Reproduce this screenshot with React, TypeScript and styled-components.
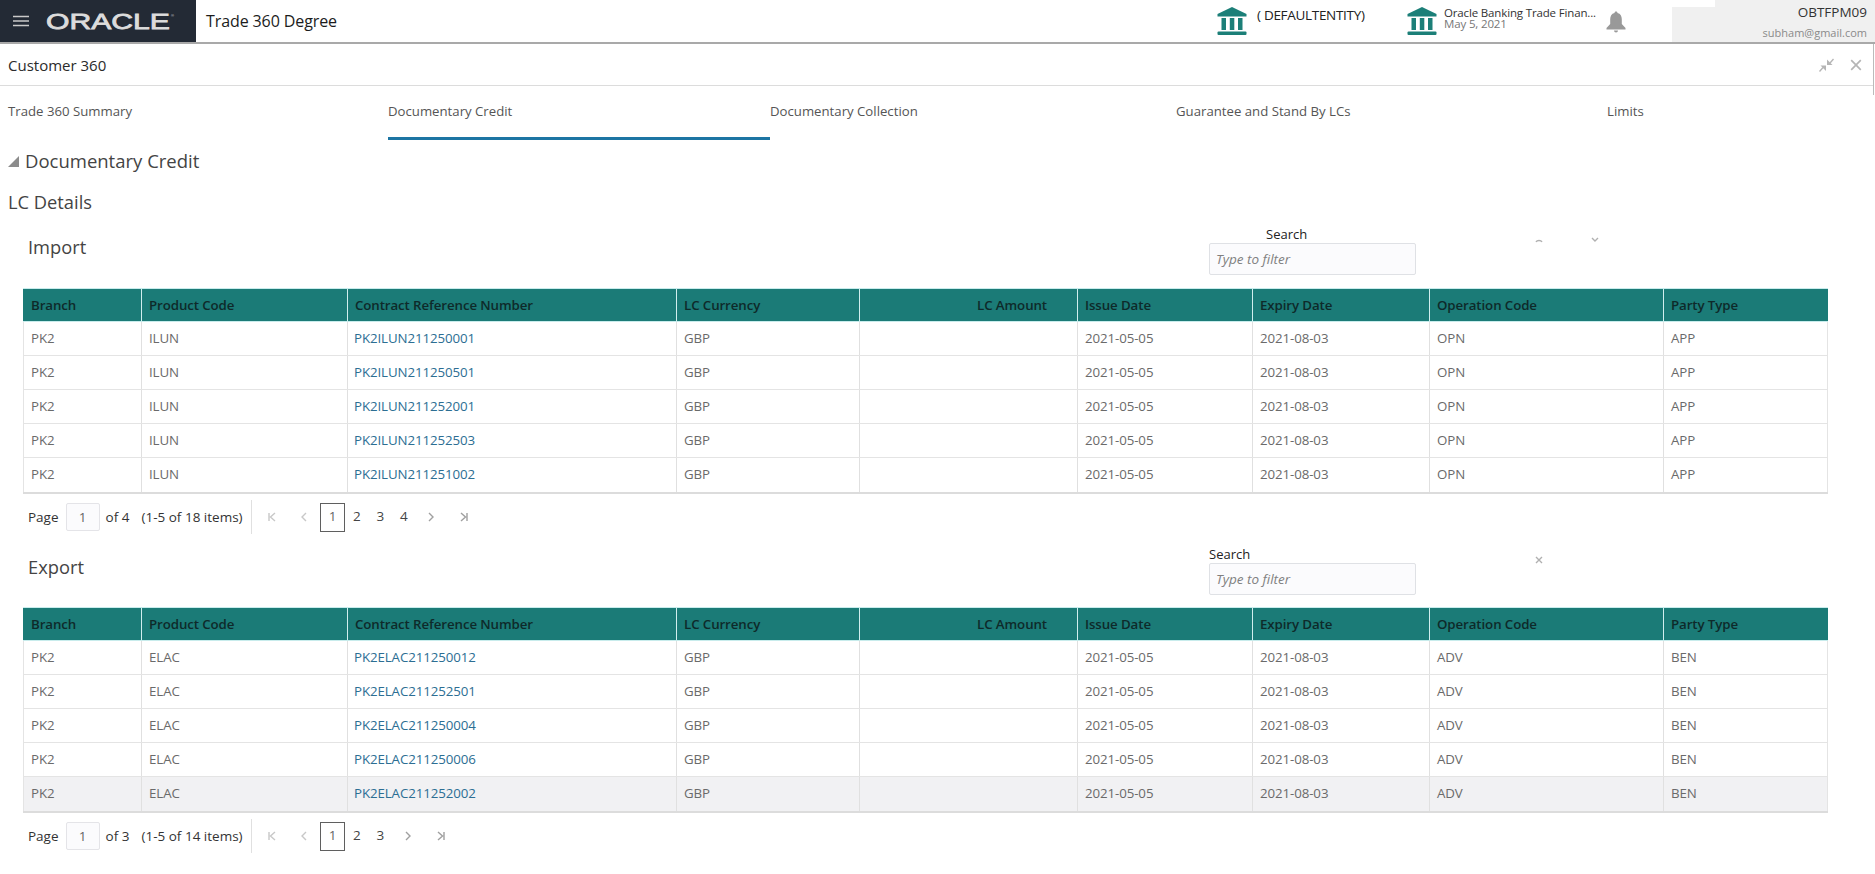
import React from "react";
import styled, { createGlobalStyle } from "styled-components";

const Global = createGlobalStyle`
  html, body { margin: 0; padding: 0; background: #fff; }
  body { font-family: "Open Sans", "Noto Sans", "Liberation Sans", sans-serif; overflow: hidden; }
  * { box-sizing: border-box; }
`;

const Page = styled.div`width: 1875px; height: 874px; display: flex; flex-direction: column; overflow: hidden;`;
const Header = styled.header`height: 44px; display: flex; align-items: stretch; border-bottom: 2px solid #a9a9a9; flex: none;`;
const Brand = styled.div`width: 196px; background: #232a35; display: flex; align-items: center; padding-left: 13px; gap: 17px; color: #ddd;`;
const AppTitle = styled.div`font-size: 16px; color: #1c1c1c; padding: 0 0 1px 10px; display: flex; align-items: center; letter-spacing: -0.1px;`;
const HeaderRight = styled.div`margin-left: auto; display: flex; align-items: stretch;`;
const Entity = styled.div<{ $w: number; $gap: number }>`width: ${(p) => p.$w}px; display: flex; gap: ${(p) => p.$gap}px; padding-top: 7px; align-items: flex-start;`;
const EntityName = styled.div`font-size: 13.5px; color: #222; line-height: 16px; letter-spacing: -0.3px; white-space: nowrap;`;
const EntityStack = styled.div`display: flex; flex-direction: column; margin-top: 0; white-space: nowrap;`;
const EntityLine = styled.span`font-size: 11.5px; line-height: 11px; color: #333; letter-spacing: -0.15px;`;
const EntityDate = styled(EntityLine)`color: #777;`;
const Bell = styled.div`width: 66px; padding-top: 11px;`;
const User = styled.div`position: relative; width: 203px; background: #f0f0f0; text-align: right; padding: 3px 8px 0 0;
  &::before { content: ""; position: absolute; left: 0; top: 0; width: 43px; height: 7px; background: #fff; }`;
const UserName = styled.div`font-size: 13.5px; color: #333; line-height: 18px;`;
const UserMail = styled.div`font-size: 11px; color: #8a8a8a; line-height: 16px; margin-top: 4px;`;

const TitleBar = styled.div`position: relative; width: 1874px; height: 42px; flex: none; display: flex; align-items: center; justify-content: space-between; padding: 0 11px 0 8px; border-bottom: 1px solid #dcdcdc; border-right: 1px solid #bbb; font-size: 15px; color: #2b2b2b;
  &::after { content: ""; position: absolute; right: -1px; top: 41px; width: 1px; height: 10px; background: #bbb; }`;
const TitleTools = styled.div`display: flex; gap: 16px; align-items: center; color: #b5b5b5;`;

const Tabs = styled.nav`height: 55px; flex: none; display: grid; grid-template-columns: 380px 382px 406px 431px 1fr; padding-left: 8px;`;
const Tab = styled.div<{ $active?: boolean }>`font-size: 13.2px; color: #555; padding-top: 16px;
  border-bottom: 3px solid ${(p) => (p.$active ? "#1c75a3" : "transparent")}; height: 54px;`;

const Content = styled.main`padding: 0 47px 0 8px; display: flex; flex-direction: column;`;
const Collapse = styled.div`display: flex; align-items: center; gap: 6px; height: 38px; font-size: 18.5px; color: #444;`;
const Tri = styled.span`width: 0; height: 0; border-style: solid; border-width: 0 0 11px 11px; border-color: transparent transparent #8c8c8c transparent; margin-top: 3px;`;
const SubHead = styled.div`font-size: 18.3px; color: #444; height: 26px; line-height: 26px; margin-top: 10px;`;

const Toolbar = styled.div<{ $h: number }>`display: flex; height: ${(p) => p.$h}px; margin-left: 20px;`;
const SectionName = styled.div<{ $top: number }>`font-size: 18.3px; color: #444; width: 1181px; padding-top: ${(p) => p.$top}px; line-height: 26px;`;
const SearchBox = styled.div<{ $top: number }>`width: 207px; display: flex; flex-direction: column; flex: none; padding-top: ${(p) => p.$top}px;`;
const SearchLabel = styled.label<{ $indent: number }>`font-size: 13px; color: #222; line-height: 16px; padding-left: ${(p) => p.$indent}px; height: 17px;`;
const FilterInput = styled.div`height: 32px; border: 1px solid #dfe1e5; border-radius: 2px; background: #fbfbfd; font-size: 13.5px; font-style: italic; color: #808080; padding: 6px 6px; line-height: 18px;`;
const ToolIcons = styled.div<{ $top: number }>`display: flex; margin-left: 118px; gap: 46px; color: #b0b0b0; padding-top: ${(p) => p.$top}px; align-items: flex-start;`;

const Grid = styled.div`margin-left: 15px; width: 1805px; display: flex; flex-direction: column; border-bottom: 2px solid #dcdcdc;`;
const cols = "118px 206px 329px 183px 218px 175px 177px 234px 165px";
const HeadRow = styled.div`display: grid; grid-template-columns: ${cols}; height: 34px; background: #1b7b77; border-top: 1px solid #c8ecec; border-bottom: 1px solid #c8ecec;`;
const HeadCell = styled.div<{ $right?: boolean }>`font-size: 13.3px; font-weight: 600; color: #0e2a2a; padding: 0 0 0 7px; line-height: 32px; letter-spacing: -0.1px; border-left: 1px solid #d2eeee; white-space: nowrap;
  text-align: ${(p) => (p.$right ? "right" : "left")}; padding-right: ${(p) => (p.$right ? "30px" : "0")};
  &:first-child { border-left: none; padding-left: 8px; }`;
const Row = styled.div<{ $hl?: boolean }>`display: grid; grid-template-columns: ${cols}; height: 34px; background: ${(p) => (p.$hl ? "#f1f1f3" : "#fff")}; border-bottom: 1px solid #e4e4e4; box-shadow: inset 1px 0 #e4e4e4, inset -1px 0 #e4e4e4; &:last-child { border-bottom: none; }`;
const Cell = styled.div`font-size: 13.3px; color: #6a6a6a; padding-left: 7px; line-height: 33px; border-left: 1px solid #e0e0e0; white-space: nowrap; letter-spacing: -0.1px; &:first-child { border-left: none; padding-left: 8px; }`;
const LinkCell = styled(Cell)`color: #2c6e93; padding-left: 6px;`;

const Pager = styled.div`height: 46px; display: flex; align-items: center; margin-left: 20px; font-size: 13.5px; color: #333;`;
const PageInput = styled.div`width: 34px; height: 28px; margin: 0 6px 0 7px; border: 1px solid #e4e4e8; border-radius: 2px; background: #fbfbfd; text-align: center; line-height: 26px; color: #666;`;
const PagerCount = styled.span`margin-left: 12px; margin-right: 8px;`;
const Sep = styled.span`width: 1px; height: 34px; background: #e0e0e0;`;
const PagerNav = styled.div`display: flex; align-items: center; margin-left: 9px;`;
const NavIcon = styled.span<{ $w: number; $dim?: boolean; $lead?: number }>`width: ${(p) => p.$w}px; padding-left: ${(p) => p.$lead ?? 0}px; display: flex; justify-content: center; color: ${(p) => (p.$dim ? "#c8c8c8" : "#a0a0a0")};`;
const PageNum = styled.span<{ $on?: boolean }>`width: ${(p) => (p.$on ? 25 : 23.5)}px; height: 29px; display: flex; align-items: center; justify-content: center; line-height: 1; border: ${(p) => (p.$on ? "1px solid #5f5f5f" : "none")}; color: ${(p) => (p.$on ? "#666" : "#444")};`;

const Bank = () => (
  <svg width="30" height="28" viewBox="0 0 30 28" fill="#1c7f78">
    <path d="M15 0 L29.500 7 V9.500 H0.500 V7 Z" />
    <rect x="4.500" y="11" width="4.500" height="12" />
    <rect x="12.800" y="11" width="4.500" height="12" />
    <rect x="21" y="11" width="4.500" height="12" />
    <rect x="0.500" y="24.500" width="29" height="3.500" rx="1" />
  </svg>
);

const BellIcon = () => (
  <svg width="20" height="22" viewBox="0 0 20 22" fill="#999">
    <path d="M10 0.500c1 0 1.500.7 1.500 1.500 3.100.7 4.300 3.300 4.300 6.300v4.700L19.500 17v1.500H.5V17l3.700-4V8.300c0-3 1.200-5.600 4.300-6.300C8.500 1.200 9 .5 10 .5z" />
    <path d="M8 19.500h4a2 2 0 0 1-4 0z" />
  </svg>
);

const Icon = ({ d, size = 10 }: { d: string; size?: number }) => (
  <svg width={size} height={size} viewBox="0 0 10 10" fill="none" stroke="currentColor" strokeWidth="1.4"><path d={d} /></svg>
);

const CollapseIcon = () => (
  <svg width="15" height="16" viewBox="0 0 15 16" fill="currentColor">
    <path d="M8 8V2.500L13.500 8z" transform="rotate(0)" />
    <path d="M10.500 5.500L14 1.500l1 1-3.500 4z" />
    <path d="M7 8.500v5.500L1.500 8.500z" />
    <path d="M4.500 11L1 15l-1-1 3.500-4z" />
  </svg>
);

const Logo = () => (
  <svg width="132" height="22" viewBox="0 0 132 22">
    <text x="0" y="19" textLength="124" lengthAdjust="spacingAndGlyphs" fontFamily="'Liberation Sans', sans-serif" fontSize="22" stroke="#dcdcdc" strokeWidth="0.8" fill="#dcdcdc">ORACLE</text>
    <text x="125" y="7" fontSize="4" fill="#dcdcdc" fontFamily="'Liberation Sans', sans-serif">®</text>
  </svg>
);

const columns = ["Branch", "Product Code", "Contract Reference Number", "LC Currency", "LC Amount", "Issue Date", "Expiry Date", "Operation Code", "Party Type"];

type Data = { prod: string; op: string; party: string; refs: string[]; hl?: number };

const LcTable = ({ prod, op, party, refs, hl }: Data) => (
  <Grid>
    <HeadRow>
      {columns.map((c) => <HeadCell key={c} $right={c === "LC Amount"}>{c}</HeadCell>)}
    </HeadRow>
    {refs.map((r, i) => (
      <Row key={r} $hl={hl === i}>
        <Cell>PK2</Cell>
        <Cell>{prod}</Cell>
        <LinkCell>{r}</LinkCell>
        <Cell>GBP</Cell>
        <Cell />
        <Cell>2021-05-05</Cell>
        <Cell>2021-08-03</Cell>
        <Cell>{op}</Cell>
        <Cell>{party}</Cell>
      </Row>
    ))}
  </Grid>
);

const PagerBar = ({ pages, total }: { pages: number; total: number }) => (
  <Pager>
    <span>Page</span>
    <PageInput>1</PageInput>
    <span>of {pages}</span>
    <PagerCount>(1-5 of {total} items)</PagerCount>
    <Sep />
    <PagerNav>
      <NavIcon $w={23} $dim><Icon d="M2 1v8M8 1L3.500 5l4.500 4" /></NavIcon>
      <NavIcon $w={36.500} $lead={4} $dim><Icon d="M7 1L3 5l4 4" /></NavIcon>
      <PageNum $on>1</PageNum>
      {Array.from({ length: pages - 1 }, (_, i) => <PageNum key={i}>{i + 2}</PageNum>)}
      <NavIcon $w={31}><Icon d="M3 1l4 4-4 4" /></NavIcon>
      <NavIcon $w={35}><Icon d="M8 1v8M2 1l4.500 4L2 9" /></NavIcon>
    </PagerNav>
  </Pager>
);

export default function App() {
  return (
    <Page>
      <Global />
      <Header>
        <Brand>
          <svg width="16" height="12" viewBox="0 0 16 12" stroke="#c9c9c9" strokeWidth="1.500"><path d="M0 1.500h16M0 6h16M0 10.500h16" /></svg>
          <Logo />
        </Brand>
        <AppTitle>Trade 360 Degree</AppTitle>
        <HeaderRight>
          <Entity $w={190} $gap={10}>
            <Bank />
            <EntityName>( DEFAULTENTITY)</EntityName>
          </Entity>
          <Entity $w={199} $gap={7}>
            <Bank />
            <EntityStack>
              <EntityLine>Oracle Banking Trade Finan...</EntityLine>
              <EntityDate>May 5, 2021</EntityDate>
            </EntityStack>
          </Entity>
          <Bell><BellIcon /></Bell>
          <User>
            <UserName>OBTFPM09</UserName>
            <UserMail>subham@gmail.com</UserMail>
          </User>
        </HeaderRight>
      </Header>
      <TitleBar>
        <span>Customer 360</span>
        <TitleTools>
          <CollapseIcon />
          <Icon size={12} d="M1 1l8 8M9 1L1 9" />
        </TitleTools>
      </TitleBar>
      <Tabs>
        <Tab>Trade 360 Summary</Tab>
        <Tab $active>Documentary Credit</Tab>
        <Tab>Documentary Collection</Tab>
        <Tab>Guarantee and Stand By LCs</Tab>
        <Tab>Limits</Tab>
      </Tabs>
      <Content>
        <Collapse><Tri />Documentary Credit</Collapse>
        <SubHead>LC Details</SubHead>
        <Toolbar $h={73}>
          <SectionName $top={19}>Import</SectionName>
          <SearchBox $top={11}>
            <SearchLabel $indent={57}>Search</SearchLabel>
            <FilterInput>Type to filter</FilterInput>
          </SearchBox>
          <ToolIcons $top={20}>
            <Icon d="M2 7c1-2 5-2 6 0" />
            <Icon d="M2 3l3 3 3-3" />
          </ToolIcons>
        </Toolbar>
        <LcTable prod="ILUN" op="OPN" party="APP" refs={["PK2ILUN211250001", "PK2ILUN211250501", "PK2ILUN211252001", "PK2ILUN211252503", "PK2ILUN211251002"]} />
        <PagerBar pages={4} total={18} />
        <Toolbar $h={67}>
          <SectionName $top={14}>Export</SectionName>
          <SearchBox $top={6}>
            <SearchLabel $indent={0}>Search</SearchLabel>
            <FilterInput>Type to filter</FilterInput>
          </SearchBox>
          <ToolIcons $top={15}>
            <Icon d="M2 2l6 6M8 2l-6 6" />
          </ToolIcons>
        </Toolbar>
        <LcTable prod="ELAC" op="ADV" party="BEN" hl={4} refs={["PK2ELAC211250012", "PK2ELAC211252501", "PK2ELAC211250004", "PK2ELAC211250006", "PK2ELAC211252002"]} />
        <PagerBar pages={3} total={14} />
      </Content>
    </Page>
  );
}
